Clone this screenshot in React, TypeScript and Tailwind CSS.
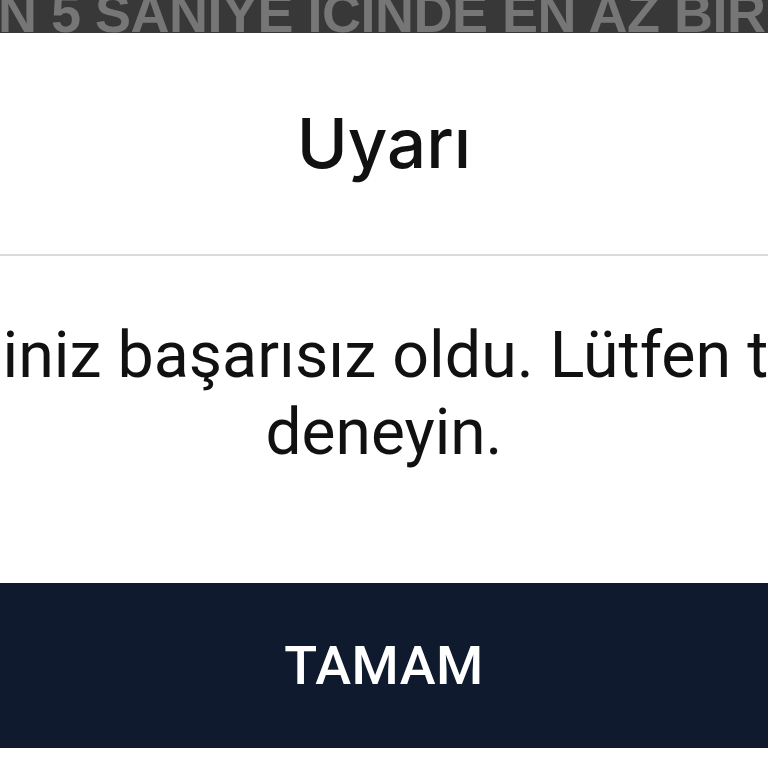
export default function App() {
  return (
    <div className="flex h-[768px] w-[768px] flex-col overflow-hidden bg-white">
      {/* video caption strip peeking above the dialog */}
      <div className="h-[33px] shrink-0 overflow-hidden bg-[#383838]">
        <div className="mt-[-14px] ml-[-2px] whitespace-nowrap font-['Liberation_Sans',Arial,sans-serif] text-[54px] font-bold leading-none tracking-[-0.5px] text-[#767676]">
          N 5 SANIYE ICINDE EN AZ BIR
        </div>
      </div>

      <div className="flex h-[221px] shrink-0 items-center justify-center">
        <h1 className="font-['Inter',sans-serif] text-[69px] font-medium leading-none text-[#111111]">Uyarı</h1>
      </div>

      <div className="h-[2px] shrink-0 bg-[#dadada]" />

      <div className="flex shrink-0 flex-col overflow-hidden pt-[60px] font-['Roboto',sans-serif] leading-[78px] text-[#111111]">
        <div className="flex justify-center pr-[10px]">
          <span className="whitespace-nowrap text-[64.5px]">İşleminiz başarısız oldu. Lütfen tekrar</span>
        </div>
        <div className="flex justify-center">
          <span className="whitespace-nowrap text-[64px]">deneyin.</span>
        </div>
      </div>

      <button className="mt-[111px] flex h-[165px] w-full shrink-0 items-center justify-center bg-[#101a2f] font-['Roboto',sans-serif] text-[54px] font-medium leading-none tracking-[0.5px] text-white">
        TAMAM
      </button>
    </div>
  );
}
